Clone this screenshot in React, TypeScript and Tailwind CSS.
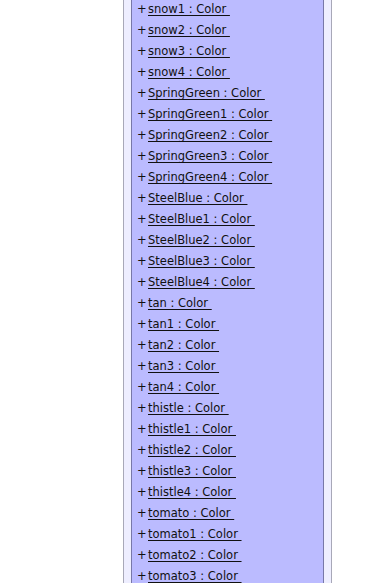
const names = [
  'snow1', 'snow2', 'snow3', 'snow4',
  'SpringGreen', 'SpringGreen1', 'SpringGreen2', 'SpringGreen3', 'SpringGreen4',
  'SteelBlue', 'SteelBlue1', 'SteelBlue2', 'SteelBlue3', 'SteelBlue4',
  'tan', 'tan1', 'tan2', 'tan3', 'tan4',
  'thistle', 'thistle1', 'thistle2', 'thistle3', 'thistle4',
  'tomato', 'tomato1', 'tomato2', 'tomato3',
]

const App = () => {
  return (
    <div className="h-[584px] overflow-hidden bg-white" style={{ fontFamily: '"DejaVu Sans", sans-serif' }}>
      <div className="ml-[123px] w-[209px] h-full border-x border-[#a8a8b8] bg-[#eeeeff] px-[7px]">
        <div className="h-full border-x border-[#7878a8] bg-[#bbbbff] pl-[5px]">
          <ul className="-mt-[1px]">
            {names.map((name) => (
              <li key={name} className="flex h-[21px] items-center text-[11.5px] leading-[21px] text-[#111]">
                <span className="w-[11px]">+</span>
                <a href="#" className="underline underline-offset-2 whitespace-pre">
                  {name + ' : Color '}
                </a>
              </li>
            ))}
          </ul>
        </div>
      </div>
    </div>
  )
}

export default App
